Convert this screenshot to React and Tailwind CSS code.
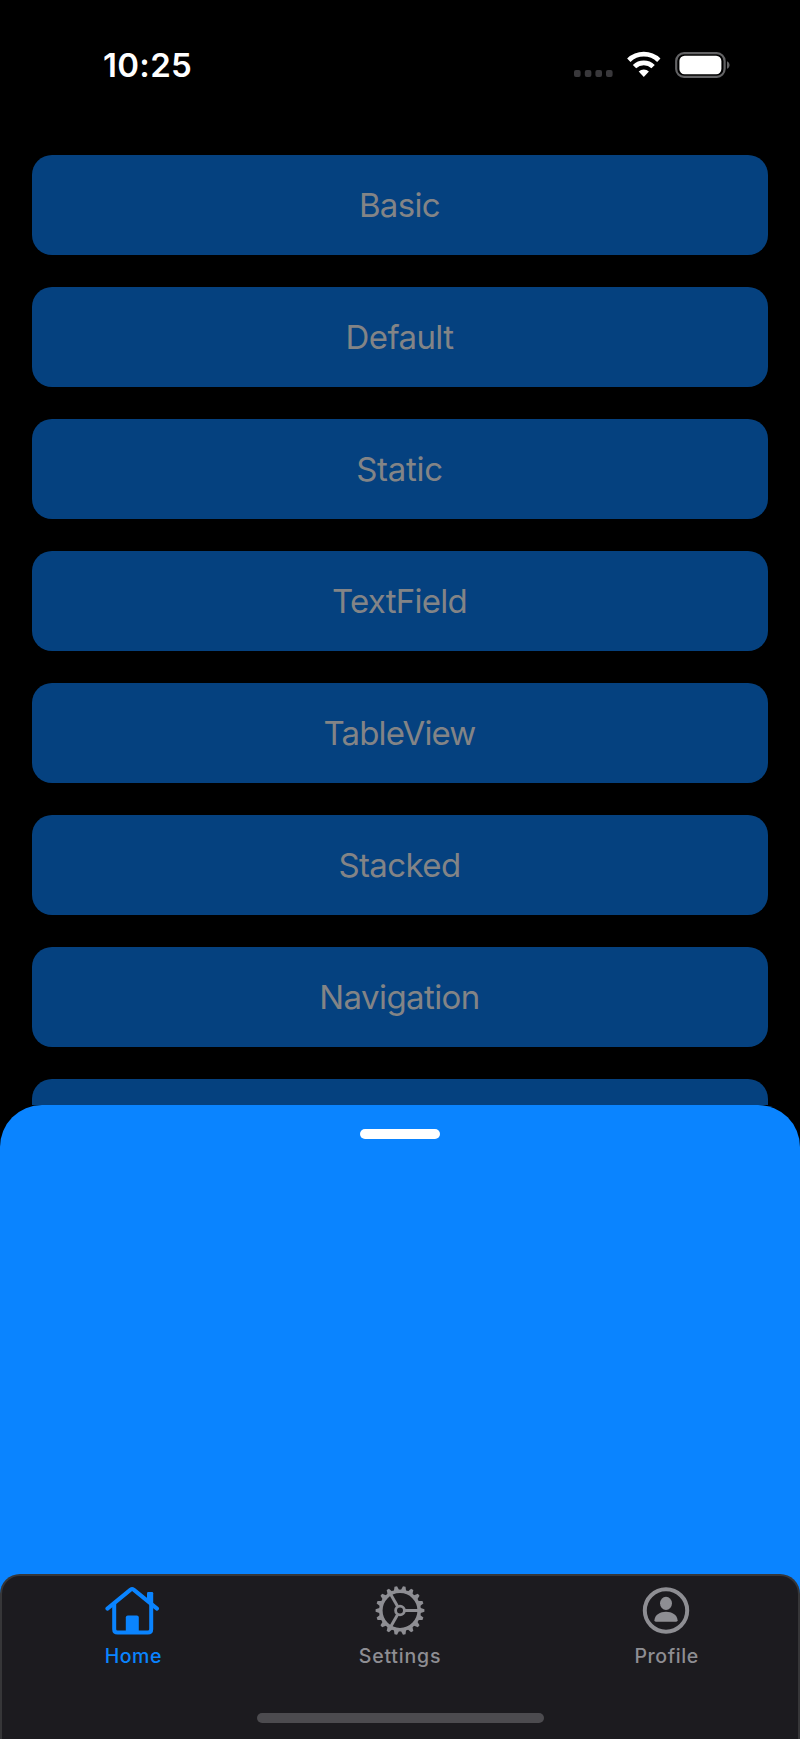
const ITEMS = [
  ["Basic", "tracking-[-0.65px]"],
  ["Default", "tracking-[-0.6px]"],
  ["Static", "tracking-[-0.3px]"],
  ["TextField", "tracking-[-0.75px]"],
  ["TableView", "tracking-[-0.85px]"],
  ["Stacked", "tracking-[-0.6px]"],
  ["Navigation", "tracking-[-0.6px]"],
  ["", ""],
];

function StatusBar() {
  return (
    <header className="flex h-[155px] items-start justify-between pt-[43px] pr-[69px] pl-[103px]">
      <span className="text-[33px] leading-[44px] font-semibold tracking-[0.3px] text-white">10:25</span>
      <svg className="mt-[5px]" width="157" height="34" viewBox="0 0 157 34">
        <g fill="#39383b">
          <rect x="0" y="22" width="6.6" height="7" rx="2" />
          <rect x="10.8" y="22" width="6.6" height="7" rx="2" />
          <rect x="21.4" y="22" width="6.6" height="7" rx="2" />
          <rect x="32" y="22" width="6.6" height="7" rx="2" />
        </g>
        <g fill="none" stroke="#fff" strokeWidth="4.8">
          <path d="M54.8 12.2a21.7 21.7 0 0 1 30 0" />
          <path d="M60.5 18.6a13.3 13.3 0 0 1 18.6 0" />
        </g>
        <path d="M64.7 23.6a7.5 7.5 0 0 1 10.2 0L69.8 28.9Z" fill="#fff" />
        <rect x="102.2" y="5.2" width="48.4" height="23.6" rx="7.8" fill="none" stroke="#636365" strokeWidth="2.2" />
        <rect x="105.4" y="7.8" width="42" height="18.4" rx="5.2" fill="#fff" />
        <path d="M153 13.2c3.4 1.5 3.4 6.1 0 7.6Z" fill="#636365" />
      </svg>
    </header>
  );
}

function HomeIcon() {
  return (
    <svg width="56" height="50" viewBox="0 0 56 50" fill="none" stroke="#0a84ff" strokeWidth="4" strokeLinecap="round" strokeLinejoin="round">
      <path d="M2.4 23.6 25.6 4.6Q27.1 3.5 28.6 4.6L52 23.6" />
      <path d="M9.2 19v25.2q0 3.4 3.4 3.4h30.2q3.4 0 3.4-3.4V19" />
      <path d="M42 8.2q0-1.2 1.2-1.2h3.8q1.2 0 1.2 1.2V21l-6.2-5Z" fill="#0a84ff" stroke="none" />
      <path d="M20.8 47V32.5q0-2 2-2h9q2 0 2 2V47Z" fill="#0a84ff" stroke="none" />
    </svg>
  );
}

const TEETH = Array.from({ length: 18 }, (_, i) => i * 20);

function GearIcon() {
  return (
    <svg width="50" height="50" viewBox="-25 -25.5 50 50" fill="none" stroke="#8e8e93">
      <circle r="19.2" strokeWidth="3.6" />
      <circle r="4.4" strokeWidth="2.8" />
      {[0, 120, 240].map((a) => (
        <path key={a} d="M5 0H19" strokeWidth="3" transform={`rotate(${a})`} />
      ))}
      {TEETH.map((a) => (
        <path key={a} d="M20-2.7 24.4-1.3V1.3L20 2.7Z" fill="#8e8e93" stroke="none" transform={`rotate(${a})`} />
      ))}
    </svg>
  );
}

function ProfileIcon() {
  return (
    <svg width="50" height="50" viewBox="-24.5 -25.5 50 50" fill="#8e8e93">
      <circle cx="-0.5" r="21.2" fill="none" stroke="#8e8e93" strokeWidth="4" />
      <ellipse cx="-0.5" cy="-7.2" rx="6" ry="6.6" />
      <path transform="translate(-0.5 0)" d="M-11.6 9.8C-11 4-6 1.2 0 1.2S11 4 11.6 9.8Q11.6 11.2 10.2 11.2H-10.2Q-11.6 11.2-11.6 9.8Z" />
    </svg>
  );
}

function Tab({ icon, label, className }) {
  return (
    <div className={`flex flex-1 flex-col items-center ${className}`}>
      <div className="flex h-[50px] items-center">{icon}</div>
      <span className="mt-[9px] text-[19.5px] leading-6 font-medium">{label}</span>
    </div>
  );
}

export default function App() {
  return (
    <div className="flex h-[1739px] w-[800px] flex-col overflow-hidden bg-black font-['Inter',sans-serif]">
      <StatusBar />
      <main className="flex h-[950px] flex-none flex-col gap-8 overflow-hidden px-8">
        {ITEMS.map(([label, tracking], i) => (
          <div key={i} className="flex h-[100px] flex-none items-center justify-center rounded-[20px] bg-[#05417f] pt-0.5 pr-px text-[33px] text-[#838486]">
            <span className={tracking}>{label}</span>
          </div>
        ))}
      </main>
      <section className="-mt-8 flex h-[666px] flex-none flex-col pt-8">
        <div className="flex flex-1 flex-col items-center justify-between rounded-t-[42px] bg-[#0a84ff]">
          <div className="mt-6 h-2.5 w-20 rounded-full bg-white" />
          <nav className="flex h-[165px] w-full flex-col items-center rounded-t-[20px] border-2 border-b-0 border-[#363638] bg-[#1c1b1f]">
            <div className="flex w-[800px] flex-none pt-[9px]">
              <Tab icon={<HomeIcon />} label="Home" className="tracking-[0.5px] text-[#0a84ff]" />
              <Tab icon={<GearIcon />} label="Settings" className="tracking-[0.8px] text-[#8e8e93]" />
              <Tab icon={<ProfileIcon />} label="Profile" className="tracking-[0.6px] text-[#8e8e93]" />
            </div>
            <div className="mt-auto mb-4 h-2.5 w-[287px] rounded-full bg-[#4c4b4f]" />
          </nav>
        </div>
      </section>
    </div>
  );
}
